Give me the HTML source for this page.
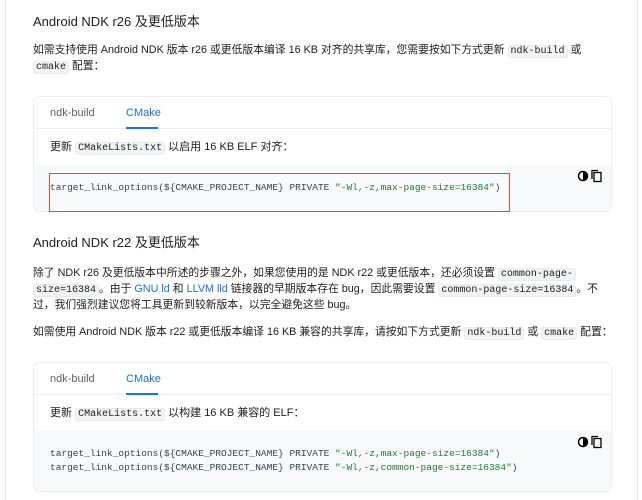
<!DOCTYPE html><html><head><meta charset="utf-8"><style>
body{margin:0;width:642px;height:500px;overflow:hidden;background:#fff;font-family:"Liberation Sans","Noto Sans CJK SC",sans-serif;color:#202124;position:relative}
.frame{position:absolute;left:5px;top:0;width:631px;height:500px;border-left:1px solid #e8eaed;border-right:1px solid #e8eaed}
h2{margin:0;font-size:13px;line-height:18px;font-weight:400;position:absolute;left:33px;white-space:nowrap}
.l{position:absolute;left:33px;font-size:10.8px;line-height:16px;white-space:nowrap}
code{font-family:"Liberation Mono",monospace;font-size:10px;background:#f1f3f4;border:1px solid #e8eaed;border-radius:3px;padding:0 2px}
.card{position:absolute;left:33px;width:577px;border:1px solid #eceff1;border-radius:7px;overflow:hidden;background:#fff}
.tabs{height:31px;border-bottom:1px solid #eceff1;position:relative;font-size:11px}
.t1{position:absolute;left:16px;top:10px;color:#5f6368}
.t2{position:absolute;left:92px;top:10px;color:#1a73e8}
.ul{position:absolute;left:92px;width:32px;bottom:-1px;height:2px;background:#1a73e8}
.desc{font-size:11px;padding:0 16px;height:36px;line-height:36px}
.code{background:#f8f9fa;position:relative;font-family:"Liberation Mono",monospace;font-size:9.5px;color:#37474f;padding-left:16px;white-space:nowrap}
.g{color:#188038}
a{color:#1a73e8}
.ic{position:absolute;right:8px;top:4px}
</style></head><body><div class="frame"></div>
<h2 style="top:13px">Android NDK r26 及更低版本</h2>
<div class="l" style="top:42px">如需支持使用 Android NDK 版本 r26 或更低版本编译 16 KB 对齐的共享库，您需要按如下方式更新 <code>ndk-build</code> 或</div>
<div class="l" style="top:58px"><code>cmake</code> 配置：</div>
<div class="card" style="top:96px">
<div class="tabs"><span class="t1">ndk-build</span><span class="t2">CMake</span><div class="ul"></div></div>
<div class="desc">更新 <code>CMakeLists.txt</code> 以启用 16 KB ELF 对齐：</div>
<div class="code" style="height:46px;line-height:46px">target_link_options(${CMAKE_PROJECT_NAME} PRIVATE <span class="g">"-Wl,-z,max-page-size=16384"</span>)
<svg class="ic" width="26" height="14" viewBox="0 0 26 14"><circle cx="6" cy="7" r="4.5" fill="none" stroke="#000" stroke-width="1.5"/><path d="M6 2.5A4.5 4.5 0 0 1 6 11.5Z" fill="#000"/><rect x="17" y="3.5" width="7" height="9" fill="none" stroke="#000" stroke-width="1.3"/><path d="M15 10V1.5h6" fill="none" stroke="#000" stroke-width="1.3"/></svg></div>
</div>
<div style="position:absolute;left:49px;top:173px;width:461px;height:39px;border:1px solid #f44336;box-sizing:border-box"></div>
<h2 style="top:234px">Android NDK r22 及更低版本</h2>
<div class="l" style="top:265px">除了 NDK r26 及更低版本中所述的步骤之外，如果您使用的是 NDK r22 或更低版本，还必须设置 <code>common-page-</code></div>
<div class="l" style="top:281px"><code>size=16384</code>。由于 <a>GNU ld</a> 和 <a>LLVM lld</a> 链接器的早期版本存在 bug，因此需要设置 <code>common-page-size=16384</code>。不</div>
<div class="l" style="top:297px">过，我们强烈建议您将工具更新到较新版本，以完全避免这些 bug。</div>
<div class="l" style="top:324px">如需使用 Android NDK 版本 r22 或更低版本编译 16 KB 兼容的共享库，请按如下方式更新 <code>ndk-build</code> 或 <code>cmake</code> 配置：</div>
<div class="card" style="top:362px">
<div class="tabs"><span class="t1">ndk-build</span><span class="t2">CMake</span><div class="ul"></div></div>
<div class="desc">更新 <code>CMakeLists.txt</code> 以构建 16 KB 兼容的 ELF：</div>
<div class="code" style="height:60px;padding-top:16px;box-sizing:border-box;line-height:14px">target_link_options(${CMAKE_PROJECT_NAME} PRIVATE <span class="g">"-Wl,-z,max-page-size=16384"</span>)<br>target_link_options(${CMAKE_PROJECT_NAME} PRIVATE <span class="g">"-Wl,-z,common-page-size=16384"</span>)
<svg class="ic" width="26" height="14" viewBox="0 0 26 14"><circle cx="6" cy="7" r="4.5" fill="none" stroke="#000" stroke-width="1.5"/><path d="M6 2.5A4.5 4.5 0 0 1 6 11.5Z" fill="#000"/><rect x="17" y="3.5" width="7" height="9" fill="none" stroke="#000" stroke-width="1.3"/><path d="M15 10V1.5h6" fill="none" stroke="#000" stroke-width="1.3"/></svg></div>
</div>
</body></html>
